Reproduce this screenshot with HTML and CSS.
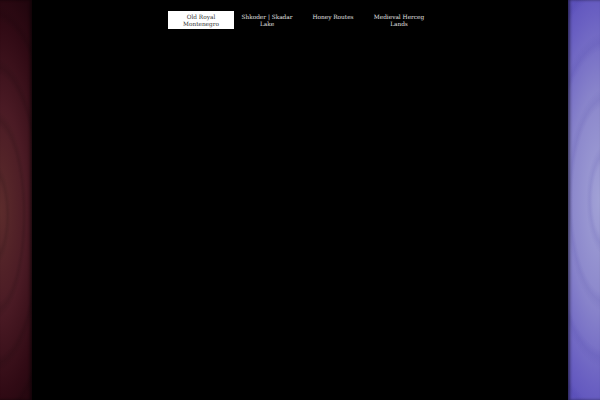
FILE: index.html
```html
<!DOCTYPE html>
<html lang="en">
<head>
<meta charset="utf-8">
<title>Montenegro Routes</title>
<link rel="stylesheet" href="styles.css">
</head>
<body>
<div class="page">
  <aside class="side side-left"></aside>
  <main class="main">
    <nav class="nav">
      <a class="nav-item active" href="#">Old Royal<br>Montenegro</a>
      <a class="nav-item" href="#">Shkoder | Skadar<br>Lake</a>
      <a class="nav-item" href="#">Honey Routes</a>
      <a class="nav-item" href="#">Medieval Herceg<br>Lands</a>
    </nav>
  </main>
  <aside class="side side-right"></aside>
</div>
</body>
</html>
```
FILE: styles.css
```css
html, body {
  margin: 0;
  padding: 0;
  height: 100%;
  background: #000;
}
.page {
  display: flex;
  width: 600px;
  height: 400px;
}
.side {
  width: 32px;
  flex: 0 0 32px;
}
.side-left {
  background:
    repeating-radial-gradient(ellipse 50px 160px at -6px 215px, rgba(0,0,0,0) 0%, rgba(0,0,0,0) 22%, rgba(0,0,0,0.10) 27%, rgba(0,0,0,0) 33%),
    radial-gradient(ellipse 60px 230px at 0 210px, #5c2c2c 0%, #4a1a24 45%, #300a14 80%, #22060e 100%);
  box-shadow: inset -2px 0 3px rgba(0,0,0,0.5);
}
.side-right {
  background:
    repeating-radial-gradient(ellipse 60px 170px at 38px 200px, rgba(255,255,255,0) 0%, rgba(255,255,255,0) 22%, rgba(50,40,150,0.10) 27%, rgba(255,255,255,0) 33%),
    radial-gradient(ellipse 70px 250px at 32px 200px, #a2a2d6 0%, #8c88cc 40%, #6a60c2 75%, #5448b8 100%);
  box-shadow: inset 2px 0 3px rgba(0,0,0,0.5);
}
.main {
  flex: 1;
  background: #000;
  display: flex;
  justify-content: center;
  align-items: flex-start;
  padding-top: 11px;
}
.nav {
  display: flex;
}
.nav-item {
  width: 66px;
  height: 18px;
  box-sizing: border-box;
  padding-top: 3px;
  text-align: center;
  font-family: "DejaVu Serif", "Liberation Serif", serif;
  font-size: 5.8px;
  line-height: 6.5px;
  color: #e0e0e0;
  text-decoration: none;
}
.nav-item.active {
  background: #fff;
  color: #333;
}
```
